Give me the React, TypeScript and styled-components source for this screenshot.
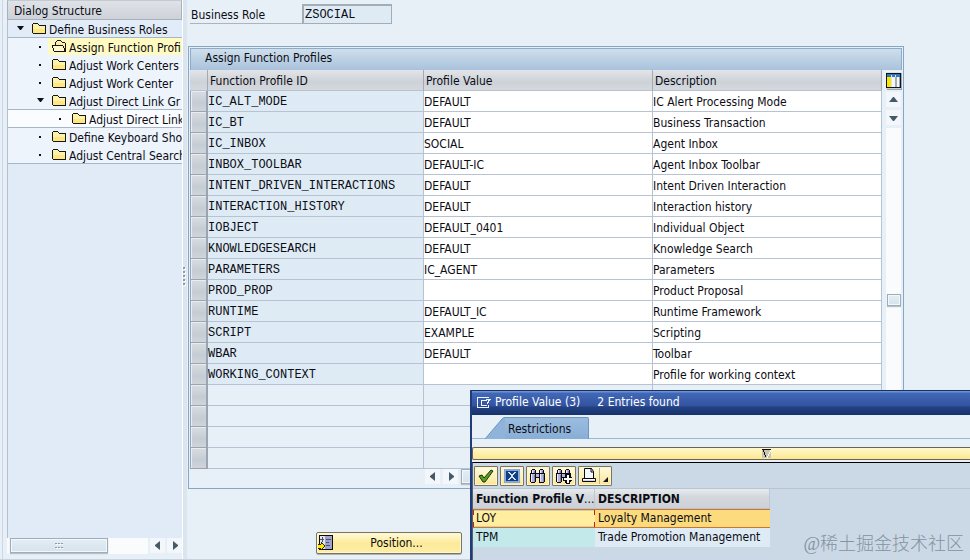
import React from "react";
import styled, { createGlobalStyle, css } from "styled-components";

const SANS = '"DejaVu Sans Condensed", "Noto Sans", "Liberation Sans", sans-serif';
const MONO = '"Liberation Mono", "DejaVu Sans Mono", monospace';

const GlobalStyle = createGlobalStyle`
  * { box-sizing: border-box; }
  body {
    margin: 0;
    background: #e8f0f7;
    color: #0c0c14;
    font: 12px/18px ${SANS};
    overflow: hidden;
  }
  button, input { font: inherit; color: inherit; margin: 0; border-radius: 0; }
  button { padding: 0; border: 0; background: none; text-align: left; }
  h1, h2, ul { margin: 0; padding: 0; font: inherit; list-style: none; }
`;

const Page = styled.div`
  display: grid;
  grid-template-columns: 183px 4px minmax(0, 1fr);
  height: 100vh;
  border-bottom: 1px solid #c9d3df;
`;

const TreePane = styled.aside`
  display: flex;
  flex-direction: column;
  min-width: 0;
  margin-left: 2px;
  padding-left: 4px;
  padding-bottom: 5px;
  border-left: 1px solid #ccd6e6;
  border-right: 1px solid #ffffff;
`;

const TreeTitle = styled.h2`
  flex: none;
  height: 20px;
  padding-left: 6px;
  line-height: 20px;
  border: 1px solid #a8b0bc;
  border-top-color: #c4cad2;
  background: linear-gradient(#dfe3e7, #cdd2d9);
`;

const TreeBody = styled.div`
  flex: 1;
  min-height: 0;
  overflow: hidden;
  border-left: 1px solid #b4bfcf;
  background: #e0ebf7;
`;

const TreeItem = styled.li<{ $tone: "top" | "mid" | "deep"; $line?: boolean }>`
  display: flex;
  height: 18px;
  background: ${(p) => ({ top: "#e2ecf8", mid: "#edf4fc", deep: "#fafcff" })[p.$tone]};
  border-bottom: 1px solid ${(p) => (p.$line ? "#a3b6cc" : "transparent")};
`;

const TreeButton = styled.button<{ $level: number }>`
  display: flex;
  flex: 1;
  gap: 4px;
  min-width: 0;
  padding-left: ${(p) => 8 + 20 * p.$level}px;
  white-space: nowrap;
  overflow: hidden;
`;

const Marker = styled.svg`
  flex: none;
  width: 8px;
  height: 18px;
`;

const TreeLabel = styled.span<{ $selected?: boolean }>`
  display: flex;
  flex: 1 0 auto;
  gap: 3px;
  height: 18px;
  padding-left: 4px;
  line-height: 20px;
  background: ${(p) => (p.$selected ? "#fffabf" : "transparent")};
`;

const Glyph = styled.svg`
  flex: none;
  display: block;
  shape-rendering: crispEdges;
`;

const HScroll = styled.div`
  display: flex;
  flex: none;
  gap: 2px;
  height: 16px;
`;

const HTrack = styled.div`
  display: flex;
  flex: 1;
  padding-left: 3px;
  background: #fafbfc;
`;

const Thumb = styled.div<{ $w: string; $h: string }>`
  display: flex;
  align-items: center;
  justify-content: center;
  width: ${(p) => p.$w};
  height: ${(p) => p.$h};
  border: 1px solid #9cadbb;
  background: linear-gradient(#e3edf4, #d6e3ed);
  box-shadow: inset 0 0 0 1px #f2f7fa, 0 1px 1px #b9c0c5;
`;

const ArrowButton = styled.button`
  display: flex;
  flex: none;
  align-items: center;
  justify-content: center;
  width: 15px;
  height: 15px;
  background: #f3f7fb;
`;

const Splitter = styled.div`
  display: flex;
  align-items: center;
  padding-bottom: 8px;
  background: #dbe5ed;
`;

const Main = styled.main`
  min-width: 0;
  padding: 4px 66px 0 1px;
`;

const Field = styled.div`
  display: flex;
  height: 20px;
  padding-left: 2px;
`;

const FieldLabel = styled.label`
  width: 112px;
  padding-left: 1px;
  line-height: 22px;
  border-bottom: 1px solid #b0b4b8;
`;

const FieldInput = styled.input`
  width: 90px;
  padding: 0 1px;
  font-family: ${MONO};
  border: 2px solid #a5adb4;
  border-right-width: 1px;
  border-bottom-width: 1px;
  background: #deebf5;
  outline: 0;
`;

const TableBox = styled.section`
  margin-top: 22px;
  border: 1px solid #86a6c9;
  padding: 1px;
`;

const TableTitle = styled.h1`
  height: 22px;
  padding-left: 14px;
  line-height: 18px;
  border: 1px solid #8fabc8;
  border-bottom: 0;
  background: linear-gradient(#cfdfeb, #a9c2dc);
`;

const TableArea = styled.div`
  display: flex;
`;

const Grid = styled.table`
  flex: 1;
  width: 0;
  table-layout: fixed;
  border-collapse: separate;
  border-spacing: 0;
`;

const SelCol = styled.col`
  width: 18px;
`;
const IdCol = styled.col`
  width: 216px;
`;

const HeadCell = styled.th`
  height: 21px;
  padding: 2px 2px 0;
  font-weight: normal;
  text-align: left;
  border-right: 1px solid #a3aab5;
  border-bottom: 1px solid #b7c1cf;
  background: linear-gradient(#e2e4e8, #cdd2d8 60%, #d5d9de);
`;

const Cell = styled.td<{ $kind: "id" | "value" | "empty" }>`
  height: 21px;
  padding: 2px 0 0;
  white-space: nowrap;
  border-right: 1px solid #b7c3d3;
  border-bottom: 1px solid #b7c3d3;
  background: ${(p) => ({ id: "#deebf5", value: "#ffffff", empty: "#e8f0f7" })[p.$kind]};
  ${(p) => p.$kind === "id" && css`font-family: ${MONO};`}
`;

const SelCell = styled.td`
  height: 21px;
  padding: 0;
`;

const RowSelector = styled.button`
  display: block;
  width: 18px;
  height: 21px;
  border: solid #9aa4b3;
  border-width: 0 2px 1px 1px;
  background: linear-gradient(#d9dde2, #c6ccd4 60%, #d0d5db);
  box-shadow: inset 1px 1px 0 #e9edf0;
`;

const SideBar = styled.div`
  display: flex;
  flex-direction: column;
  align-items: flex-end;
  gap: 3px;
  width: 20px;
  padding: 2px 1px 0 0;
`;

const ConfigButton = styled.button`
  width: 15px;
  height: 17px;
  background: linear-gradient(#dfe3e7, #cdd2d9);
  box-shadow: 1px 1px 0 #9aa4b3, -1px -1px 0 #f2f4f6;
`;

const VTrack = styled.div`
  flex: 1;
  width: 15px;
  padding: 166px 0 0 1px;
  background: #fafbfc;
`;

const TableFoot = styled.div`
  display: flex;
  gap: 3px;
  height: 18px;
  padding-left: 235px;
`;

const PositionButton = styled.button`
  display: flex;
  align-items: center;
  width: 146px;
  height: 22px;
  margin: 43px 0 0 128px;
  padding: 0 1px;
  border: 1px solid #77746a;
  border-radius: 2px;
  background: linear-gradient(#fffbd8, #fdea9a 50%, #fdeea6);
  box-shadow: inset 0 0 0 1px #fff6c9, 0 1px 0 #b3b3ac;
`;

const PositionText = styled.span`
  flex: 1;
  text-align: center;
`;

const Dialog = styled.section`
  position: absolute;
  inset: 390px 0 0 470px;
  display: flex;
  flex-direction: column;
  overflow: hidden;
  border-left: 2px solid #1f3c78;
  background: #e8f0f7;
`;

const DialogTitle = styled.h2`
  display: flex;
  flex: none;
  gap: 3px;
  height: 25px;
  padding: 2px 0 0 4px;
  color: #ffffff;
  white-space: pre;
  border-top: 1px solid #17305f;
  background: linear-gradient(#6c92d2 1px, #4168b8 2px, #3354a0 60%, #234182 68%, #17326c);
`;

const TabStrip = styled.div`
  display: flex;
  flex: none;
  height: 24px;
  padding: 2px 0 0 13px;
  border-bottom: 1px solid #9bb7d6;
`;

const TabSlant = styled.svg`
  width: 20px;
  height: 22px;
`;

const Tab = styled.button`
  width: 84px;
  height: 22px;
  padding: 1px 0 0 3px;
  border: 1px solid #6f95bf;
  border-width: 1px 1px 0 0;
  border-radius: 0 2px 0 0;
  background: linear-gradient(#9bbcdf, #88aed6);
`;

const Collapser = styled.button`
  display: block;
  flex: none;
  width: 100%;
  height: 13px;
  margin-top: 8px;
  padding-left: 289px;
  border: solid #68665a;
  border-width: 1px 0 1px 1px;
  border-radius: 2px 0 0 2px;
  background: linear-gradient(#fff8cb, #fde78e);
`;

const HitArea = styled.div`
  flex: 1;
  margin-top: 2px;
  border-top: 1px solid #000000;
  border-left: 1px solid #56606c;
  background: #cbd9e7;
`;

const Toolbar = styled.div`
  display: flex;
  gap: 2px;
  height: 26px;
  padding: 3px 0 0 1px;
  border-bottom: 1px solid #b8c4d1;
`;

const ToolButton = styled.button<{ $wide?: boolean }>`
  display: flex;
  align-items: center;
  justify-content: center;
  width: ${(p) => (p.$wide ? 34 : 24)}px;
  height: 20px;
  border: 1px solid #77746a;
  border-radius: 1px;
  background: linear-gradient(#fffbe0, #fbe596);
  box-shadow: inset 0 0 0 1px #fff4c4;
`;

const HitTable = styled.table`
  width: 297px;
  table-layout: fixed;
  border-collapse: separate;
  border-spacing: 0;
`;

const HitCol = styled.col`
  width: 122px;
`;

const HitHead = styled.th`
  height: 20px;
  padding: 1px 0 0 3px;
  text-align: left;
  white-space: nowrap;
  border-right: 1px solid #c0c8d4;
  border-bottom: 1px solid #b8c4d1;
  background: linear-gradient(#e8ebee, #d3d8dd 40%, #cdd2da);
`;

const Ellipsis = styled.span`
  font-weight: normal;
`;

const HitCell = styled.td<{ $bg: string; $selected?: boolean; $focus?: boolean }>`
  height: 19px;
  padding: 0 0 0 3px;
  line-height: 17px;
  white-space: nowrap;
  border: solid ${(p) => (p.$selected ? "#cf7430" : "transparent")};
  border-width: 1px 0;
  background: ${(p) => p.$bg};
  ${(p) =>
    p.$focus &&
    css`
      background:
        linear-gradient(#c02018, #c02018) 0 0 / 1px 5px,
        linear-gradient(#c02018, #c02018) 0 100% / 1px 5px,
        linear-gradient(#c02018, #c02018) 100% 0 / 1px 5px,
        linear-gradient(#c02018, #c02018) 100% 100% / 1px 5px,
        linear-gradient(#d5cfa6, #d5cfa6) 1px 0 / 120px 1px,
        linear-gradient(#d5cfa6, #d5cfa6) 1px 100% / 120px 1px,
        ${p.$bg};
      background-repeat: no-repeat;
    `}
`;

const Watermark = styled.div`
  position: absolute;
  right: 6px;
  bottom: 4px;
  color: #8592a0;
  font: 300 18px/24px "Liberation Serif", "Noto Sans CJK SC", sans-serif;
`;

const Folder = ({ open }: { open?: boolean }) => (
  <Glyph width="14" height="18" viewBox="0 0 14 18">
    {open ? (
      <>
        <path d="M4 4h5v2h4v7H2V8h2z" fill="#ffef9c" />
        <path d="M1 8h10v2h1v3H2v-3H1z" fill="#fff9cf" />
        <path d="M5 2h4v1H5zM4 3h1v1H4zM9 3h1v1H9zM3 4h1v3H3zM10 4h3v1h-3zM13 5h1v9h-1zM0 7h11v1H0zM0 8h1v2H0zM1 10h1v3H1zM11 8h1v2h-1zM12 10h1v3h-1zM2 13h12v1H2z" fill="#17170f" />
      </>
    ) : (
      <>
        <path d="M1 4h5v2h7v7H1z" fill="#ffe680" />
        <path d="M1 4h5v2h7v3H1z" fill="#fff3ac" />
        <path d="M1 3h5v1H1zM0 4h1v9H0zM6 4h1v1H6zM7 5h6v1H7zM13 5h1v9h-1zM1 13h13v1H1z" fill="#17170f" />
      </>
    )}
  </Glyph>
);

const Arrow = ({ dir }: { dir: "left" | "right" | "up" | "down" }) => {
  const d = {
    left: "M8 1v9L3 6V5z",
    right: "M4 1v9l5-4V5z",
    up: "M1 8h9L6 3H5z",
    down: "M1 4h9L6 9H5z",
  }[dir];
  return (
    <svg width="11" height="11" viewBox="0 0 11 11" aria-hidden="true">
      <path d={d} fill="#465969" />
    </svg>
  );
};

const Grip = () => (
  <Glyph width="8" height="6" viewBox="0 0 8 6">
    <path d="M1 1h2v1H1zM4 1h2v1H4zM7 1h1v1H7zM1 5h2v1H1zM4 5h2v1H4zM7 5h1v1H7z" fill="#ffffff" />
    <path d="M0 0h2v1H0zM3 0h2v1H3zM6 0h2v1H6zM0 4h2v1H0zM3 4h2v1H3zM6 4h2v1H6z" fill="#8d9ba8" />
  </Glyph>
);

const ConfigIcon = () => (
  <Glyph width="15" height="15" viewBox="0 0 15 15">
    <path d="M0 0h15v15H0z" fill="#0b1520" />
    <path d="M1 1h13v3H1z" fill="#2f79b8" />
    <path d="M1 4h13v10H1z" fill="#a3acb6" />
    <path d="M1 4h4v10H1z" fill="#ffe600" />
    <path d="M6 4h3v10H6zM11 4h2v10h-2z" fill="#f4f6f8" />
    <path d="M5 2h1v12H5zM9 2h1v2H9z" fill="#d8e6f2" />
  </Glyph>
);

const PositionIcon = () => (
  <Glyph width="15" height="16" viewBox="0 0 15 16">
    <path d="M1 0h14v15H1z" fill="#0c0c10" />
    <path d="M2 1h5v13H2z" fill="#dfe6ee" />
    <path d="M7 1h7v13H7z" fill="#9fa2cf" />
    <path d="M2 4h4v1H2zM4 2h1v5H4zM8 4h5v1H8zM8 7h3v1H8zM8 10h4v1H8z" fill="#4b5160" />
    <path d="M0 10h3V8l4 3-4 4v-2H0z" fill="#ffe500" />
    <path d="M0 9h3v1H0zM0 13h3v1H0zM3 7h1v2H3zM4 8h1v1H4zM5 9h1v1H5zM6 10h1v2H6zM5 12h1v1H5zM4 13h1v1H4zM3 14h1v1H3z" fill="#2c2800" />
  </Glyph>
);

const CheckIcon = () => (
  <svg width="16" height="14" viewBox="0 0 16 14">
    <path d="M1 7l3-1 2 3 7-8 2 1-8 11H5z" fill="#58a01c" stroke="#15340a" strokeWidth="1" strokeLinejoin="round" />
  </svg>
);

const CancelIcon = () => (
  <Glyph width="16" height="14" viewBox="0 0 16 14">
    <path d="M0 0h16v14H0z" fill="#86a8dc" />
    <path d="M2 2h12v10H2z" fill="#123f83" />
    <path d="M4 3h2v1h1v1h2V4h1V3h2v1h-1v1h-1v1H9v2h1v1h1v1h1v1h-2v-1H9V9H7v1H6v1H4v-1h1V9h1V8h1V6H6V5H5V4H4z" fill="#d4e4f8" />
  </Glyph>
);

const FindIcon = ({ more }: { more?: boolean }) => (
  <Glyph width="16" height="16" viewBox="0 0 16 16">
    <path d="M2 1h3v1h1v3h3V2h1V1h3v1h1v3h1v9h-1v1H9v-1H9v-4H6v4H5v1H1v-1H0V5h1V2h1z" fill="#0a0a10" />
    <path d="M2 2h3v3H2zM10 2h3v3h-3zM1 6h4v8H1zM10 6h4v8h-4zM6 6h3v3H6z" fill="#b4b4e0" />
    <path d="M2 2h1v3H2zM10 2h1v3h-1zM1 6h1v8H1zM10 6h1v8h-1z" fill="#ececff" />
    <path d="M4 7h1v7H4zM13 7h1v7h-1zM4 3h1v2H4zM12 3h1v2h-1z" fill="#7e7eac" />
    {more && (
      <>
        <path d="M10 6h4v3h2v4h-2v3h-4v-3H7V9h3z" fill="#0a0a10" />
        <path d="M11 7h2v3h3v2h-3v3h-2v-3H8v-2h3z" fill="#ffffff" />
      </>
    )}
  </Glyph>
);

const PrintIcon = () => (
  <svg width="32" height="18" viewBox="0 0 32 18">
    <path d="M5.500 1.500h7l2 3v7h-9z" fill="#f3f8ff" stroke="#0a0a10" />
    <path d="M12 1v4h3" fill="none" stroke="#0a0a10" />
    <path d="M3.500 11.500h13v3h-13z" fill="#cfd7e6" stroke="#0a0a10" />
    <path d="M4 12.500h12" stroke="#ffffff" />
    <path d="M20.500 1v16" stroke="#b9b190" />
    <path d="M29 10v5h-5z" fill="#15151c" />
  </svg>
);

const WindowIcon = () => (
  <Glyph width="16" height="18" viewBox="0 0 16 18">
    <path d="M1 4h12v1H2v9h10v1H1zM5 7h6v1H6v4h5v1H5zM10 6h5v1h-1v1h-1v2h-1v1h-1V9h1V7h-2zM12 12h1v3h-1z" fill="#eef3ff" />
  </Glyph>
);

type Node = { text: string; level: number; tone: "top" | "mid" | "deep"; line?: boolean; parent?: boolean; selected?: boolean };

const TREE: Node[] = [
  { text: "Define Business Roles", level: 0, tone: "top", line: true, parent: true },
  { text: "Assign Function Profi", level: 1, tone: "mid", selected: true },
  { text: "Adjust Work Centers", level: 1, tone: "mid" },
  { text: "Adjust Work Center", level: 1, tone: "mid" },
  { text: "Adjust Direct Link Gr", level: 1, tone: "mid", line: true, parent: true },
  { text: "Adjust Direct Link", level: 2, tone: "deep", line: true },
  { text: "Define Keyboard Sho", level: 1, tone: "mid" },
  { text: "Adjust Central Search", level: 1, tone: "mid", line: true },
];

const ROWS: [string, string, string][] = [
  ["IC_ALT_MODE", "DEFAULT", "IC Alert Processing Mode"],
  ["IC_BT", "DEFAULT", "Business Transaction"],
  ["IC_INBOX", "SOCIAL", "Agent Inbox"],
  ["INBOX_TOOLBAR", "DEFAULT-IC", "Agent Inbox Toolbar"],
  ["INTENT_DRIVEN_INTERACTIONS", "DEFAULT", "Intent Driven Interaction"],
  ["INTERACTION_HISTORY", "DEFAULT", "Interaction history"],
  ["IOBJECT", "DEFAULT_0401", "Individual Object"],
  ["KNOWLEDGESEARCH", "DEFAULT", "Knowledge Search"],
  ["PARAMETERS", "IC_AGENT", "Parameters"],
  ["PROD_PROP", "", "Product Proposal"],
  ["RUNTIME", "DEFAULT_IC", "Runtime Framework"],
  ["SCRIPT", "EXAMPLE", "Scripting"],
  ["WBAR", "DEFAULT", "Toolbar"],
  ["WORKING_CONTEXT", "", "Profile for working context"],
];

const EMPTY_ROWS = [0, 1, 2, 3];

export default function App() {
  return (
    <>
      <GlobalStyle />
      <Page>
        <TreePane>
          <TreeTitle>Dialog Structure</TreeTitle>
          <TreeBody>
            <ul>
              {TREE.map((n) => (
                <TreeItem key={n.text} $tone={n.tone} $line={n.line}>
                  <TreeButton $level={n.level}>
                    <Marker viewBox="0 0 8 18">
                      {n.parent ? (
                        <path d="M1 6h7L5 10H4z" fill="#101014" />
                      ) : (
                        <path d="M3 8h2v2H3z" fill="#101014" />
                      )}
                    </Marker>
                    <TreeLabel $selected={n.selected}>
                      <Folder open={n.selected} />
                      {n.text}
                    </TreeLabel>
                  </TreeButton>
                </TreeItem>
              ))}
            </ul>
          </TreeBody>
          <HScroll>
            <HTrack>
              <Thumb $w="98px" $h="15px">
                <Grip />
              </Thumb>
            </HTrack>
            <ArrowButton aria-label="Scroll left">
              <Arrow dir="left" />
            </ArrowButton>
            <ArrowButton aria-label="Scroll right">
              <Arrow dir="right" />
            </ArrowButton>
          </HScroll>
        </TreePane>
        <Splitter>
          <Glyph width="4" height="20" viewBox="0 0 4 20">
            <path d="M1 2h2v2H1zM1 6h2v2H1zM1 10h2v2H1zM1 14h2v2H1zM1 18h2v2H1z" fill="#ffffff" />
            <path d="M0 1h2v2H0zM0 5h2v2H0zM0 9h2v2H0zM0 13h2v2H0zM0 17h2v2H0z" fill="#8e9aa8" />
          </Glyph>
        </Splitter>
        <Main>
          <Field>
            <FieldLabel htmlFor="role">Business Role</FieldLabel>
            <FieldInput id="role" defaultValue="ZSOCIAL" readOnly />
          </Field>
          <TableBox>
            <TableTitle>Assign Function Profiles</TableTitle>
            <TableArea>
              <Grid>
                <colgroup>
                  <SelCol />
                  <IdCol />
                  <col />
                  <col />
                </colgroup>
                <thead>
                  <tr>
                    <HeadCell />
                    <HeadCell>Function Profile ID</HeadCell>
                    <HeadCell>Profile Value</HeadCell>
                    <HeadCell>Description</HeadCell>
                  </tr>
                </thead>
                <tbody>
                  {ROWS.map(([id, value, text]) => (
                    <tr key={id}>
                      <SelCell>
                        <RowSelector aria-label={id} />
                      </SelCell>
                      <Cell $kind="id">{id}</Cell>
                      <Cell $kind="value">{value}</Cell>
                      <Cell $kind="value">{text}</Cell>
                    </tr>
                  ))}
                  {EMPTY_ROWS.map((n) => (
                    <tr key={n}>
                      <SelCell>
                        <RowSelector aria-label="Empty row" />
                      </SelCell>
                      <Cell $kind="empty" />
                      <Cell $kind="empty" />
                      <Cell $kind="empty" />
                    </tr>
                  ))}
                </tbody>
              </Grid>
              <SideBar>
                <ConfigButton aria-label="Table settings">
                  <ConfigIcon />
                </ConfigButton>
                <ArrowButton aria-label="Scroll up">
                  <Arrow dir="up" />
                </ArrowButton>
                <ArrowButton aria-label="Scroll down">
                  <Arrow dir="down" />
                </ArrowButton>
                <VTrack>
                  <Thumb $w="14px" $h="12px" />
                </VTrack>
              </SideBar>
            </TableArea>
            <TableFoot>
              <ArrowButton aria-label="Scroll left">
                <Arrow dir="left" />
              </ArrowButton>
              <ArrowButton aria-label="Scroll right">
                <Arrow dir="right" />
              </ArrowButton>
              <Thumb $w="120px" $h="15px" />
            </TableFoot>
          </TableBox>
          <PositionButton>
            <PositionIcon />
            <PositionText>Position...</PositionText>
          </PositionButton>
        </Main>
      </Page>
      <Dialog role="dialog" aria-label="Profile Value">
        <DialogTitle>
          <WindowIcon />
          {"Profile Value (3)     2 Entries found"}
        </DialogTitle>
        <TabStrip>
          <TabSlant viewBox="0 0 20 22">
            <path d="M0 22L17 2Q18 0.500 20 0.500V22z" fill="#8fb3d9" />
            <path d="M0 22L17 2Q18 0.500 20 0.500" fill="none" stroke="#6f95bf" />
          </TabSlant>
          <Tab>Restrictions</Tab>
        </TabStrip>
        <Collapser aria-label="Show restrictions">
          <Glyph width="9" height="9" viewBox="0 0 9 9">
            <path d="M0 0h9v9H0z" fill="#c9c5b4" />
            <path d="M8 1h1v2H8zM7 3h1v2H7zM6 5h1v2H6zM5 7h1v2H5z" fill="#ffffff" />
            <path d="M0 0h9v1H0zM1 1h1v2H1zM2 3h1v3H2zM3 6h1v2H3z" fill="#101010" />
          </Glyph>
        </Collapser>
        <HitArea>
          <Toolbar>
            <ToolButton aria-label="Copy">
              <CheckIcon />
            </ToolButton>
            <ToolButton aria-label="Close">
              <CancelIcon />
            </ToolButton>
            <ToolButton aria-label="Find">
              <FindIcon />
            </ToolButton>
            <ToolButton aria-label="Find next">
              <FindIcon more />
            </ToolButton>
            <ToolButton $wide aria-label="Print">
              <PrintIcon />
            </ToolButton>
          </Toolbar>
          <HitTable>
            <colgroup>
              <HitCol />
              <col />
            </colgroup>
            <thead>
              <tr>
                <HitHead>
                  Function Profile V<Ellipsis>...</Ellipsis>
                </HitHead>
                <HitHead>DESCRIPTION</HitHead>
              </tr>
            </thead>
            <tbody>
              <tr>
                <HitCell $bg="#ffee9e" $selected $focus>
                  LOY
                </HitCell>
                <HitCell $bg="#fcdb7d" $selected>
                  Loyalty Management
                </HitCell>
              </tr>
              <tr>
                <HitCell $bg="#c3e9ea">TPM</HitCell>
                <HitCell $bg="#deebf5">Trade Promotion Management</HitCell>
              </tr>
            </tbody>
          </HitTable>
        </HitArea>
        <Watermark>@稀土掘金技术社区</Watermark>
      </Dialog>
    </>
  );
}
